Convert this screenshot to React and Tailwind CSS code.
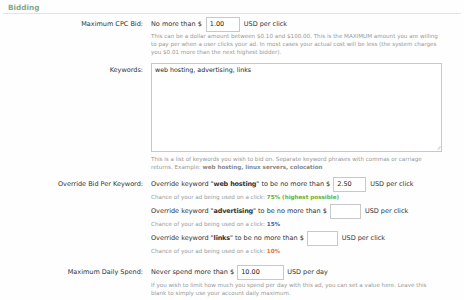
const FONT = { fontFamily: '"DejaVu Sans", Verdana, sans-serif' };

function Label({ children }) {
  return <div className="w-[143px] shrink-0 text-right text-[6.5px] text-[#333] leading-[15px]">{children}</div>;
}

function Input({ value, w }) {
  return (
    <div className={`${w} h-[15px] shrink-0 border border-[#c8c8c8] bg-white px-[3px] text-[6.5px] leading-[13px] text-[#222]`}>
      {value}
    </div>
  );
}

function Help({ children, className = '' }) {
  return <p className={`text-[5.6px] leading-[8px] text-[#999] ${className}`}>{children}</p>;
}

function Override({ kw, value, w, chance, color }) {
  return (
    <div>
      <div className="flex items-center gap-[3px] text-[6.5px] text-[#333] h-[15px]">
        <span>
          Override keyword "<b className="tracking-[-0.2px]">{kw}</b>" to be no more than $
        </span>
        <Input value={value} w={w} />
        <span className="ml-[1px]">USD per click</span>
      </div>
      <Help className="mt-[1px]">
        Chance of your ad being used on a click: <b className={color}>{chance}</b>
      </Help>
    </div>
  );
}

export default function App() {
  return (
    <div className="w-[464px] h-[300px] bg-[#fdfefd] overflow-hidden pt-[3px]" style={FONT}>
      <div className="mx-[3px] border-b border-[#dfe6df] pb-[1px] pl-[5px]">
        <h2 className="text-[7.3px] font-bold text-[#86a88e] leading-[9px]">Bidding</h2>
      </div>

      {/* Max CPC */}
      <div className="flex gap-[8px] mt-[3px]">
        <Label>Maximum CPC Bid:</Label>
        <div className="flex-1">
          <div className="flex items-center gap-[4px] text-[6.5px] text-[#333] h-[15px]">
            <span>No more than $</span>
            <Input value="1.00" w="w-[34px]" />
            <span>USD per click</span>
          </div>
          <Help className="mt-0 w-[290px]">
            This can be a dollar amount between $0.10 and $100.00. This is the MAXIMUM amount you are willing
            to pay per when a user clicks your ad. In most cases your actual cost will be less (the system charges
            you $0.01 more than the next highest bidder).
          </Help>
        </div>
      </div>

      {/* Keywords */}
      <div className="flex gap-[8px] mt-[7px]">
        <Label>Keywords:</Label>
        <div className="flex-1">
          <div className="relative w-[291px] h-[89px] border border-[#c8c8c8] bg-white px-[3px] py-[1px] text-[6.3px] leading-[10px] text-[#222]">
            web hosting, advertising, links
            <span className="absolute right-[1px] bottom-[0px] text-[5px] leading-[5px] text-[#aaa]">⁄⁄</span>
          </div>
          <Help className="mt-[3px] w-[290px]">
            This is a list of keywords you wish to bid on. Separate keyword phrases with commas or carriage
            returns. Example: <b className="text-[#888]">web hosting, linux servers, colocation</b>
          </Help>
        </div>
      </div>

      {/* Override */}
      <div className="flex gap-[8px] mt-[6px]">
        <Label>Override Bid Per Keyword:</Label>
        <div className="flex-1 flex flex-col gap-[3px]">
          <Override kw="web hosting" value="2.50" w="w-[33px]" chance="75% (highest possible)" color="text-[#66b032]" />
          <Override kw="advertising" value="" w="w-[31px]" chance="15%" color="text-[#3a68a8]" />
          <Override kw="links" value="" w="w-[31px]" chance="10%" color="text-[#e0743a]" />
        </div>
      </div>

      {/* Daily */}
      <div className="flex gap-[8px] mt-[10px]">
        <Label>Maximum Daily Spend:</Label>
        <div className="flex-1">
          <div className="flex items-center gap-[3px] text-[6.5px] text-[#333] h-[15px]">
            <span>Never spend more than $</span>
            <Input value="10.00" w="w-[47px]" />
            <span>USD per day</span>
          </div>
          <Help className="mt-[1px] w-[290px]">
            If you wish to limit how much you spend per day with this ad, you can set a value here. Leave this
            blank to simply use your account daily maximum.
          </Help>
        </div>
      </div>
    </div>
  );
}
